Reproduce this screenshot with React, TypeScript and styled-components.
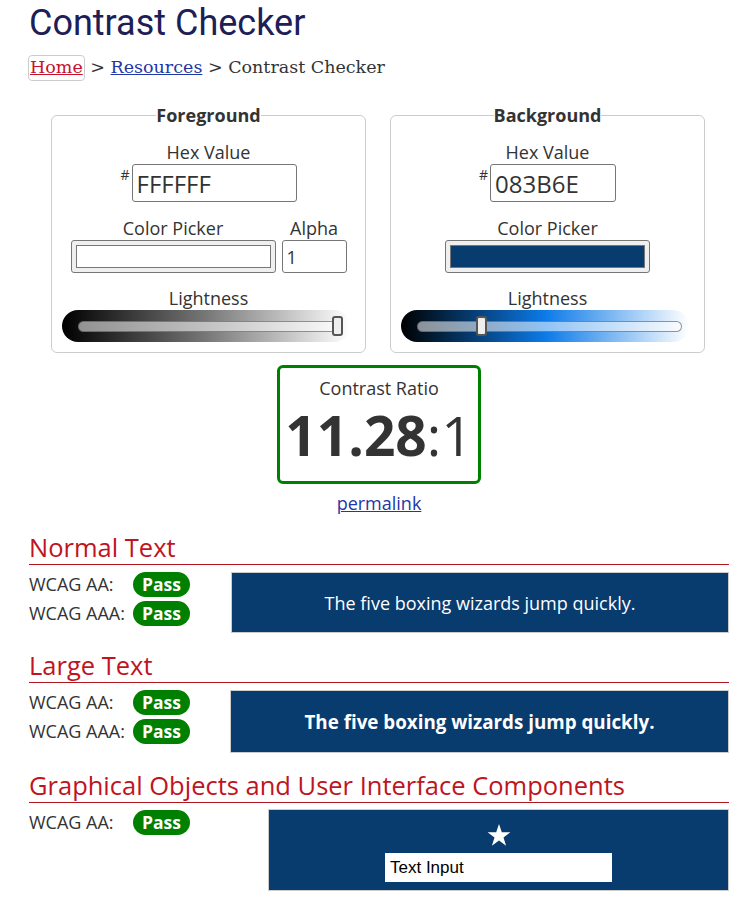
import styled, { createGlobalStyle } from 'styled-components'

const GlobalStyle = createGlobalStyle`
	body {
		margin: 0;
		font-family: 'Open Sans', 'Liberation Sans', sans-serif;
		font-size: 18px;
		color: #333;
		background: #fff;
	}
`

const Page = styled.main`
	width: 700px;
	padding: 0 17px 0 29px;
`

const Title = styled.h1`
	margin: 0;
	padding-top: 1px;
	font-family: Roboto, 'Liberation Sans', sans-serif;
	font-weight: 400;
	font-size: 36px;
	line-height: 44px;
	color: #1c2056;
`

const Crumbs = styled.nav`
	margin-top: 10px;
	font-family: 'DejaVu Serif', 'Liberation Serif', serif;
	font-size: 17.5px;
	line-height: 24px;
	color: #333;

	a {
		color: #2237a6;
	}
`

const HomeLink = styled.a`
	color: #c8102e !important;
	margin-left: -1px;
	padding: 1px 1px 3px;
	border: 1px solid #ccc;
	border-radius: 4px;
`

const Panels = styled.div`
	display: flex;
	justify-content: center;
	gap: 24px;
	margin-top: 26px;
	padding-right: 2px;
`

const Panel = styled.fieldset`
	box-sizing: border-box;
	width: 315px;
	margin: 0;
	padding: 0 0 10px;
	border: 1px solid #ccc;
	border-radius: 6px;
	display: flex;
	flex-direction: column;
	align-items: center;

	legend {
		margin: 0 auto;
		padding: 0;
		font-weight: 700;
		font-size: 18px;
		line-height: 20px;
	}
`

const Label = styled.div`
	font-size: 18px;
	line-height: 24px;
	text-align: center;
`

const HexRow = styled.div`
	display: flex;
	align-items: flex-start;

	span {
		font-size: 14px;
		line-height: 18px;
		width: 11px;
		margin-top: 2px;
	}
`

const HexInput = styled.input<{ $w: number }>`
	box-sizing: border-box;
	width: ${p => p.$w}px;
	height: 38px;
	padding: 0 4px;
	border: 1px solid #767676;
	border-radius: 3px;
	font-family: 'Open Sans', sans-serif;
	font-size: 24px;
	color: #333;
`

const PickerRow = styled.div`
	display: flex;
	gap: 6px;
	margin-top: 14px;
`

const Field = styled.div`
	display: flex;
	flex-direction: column;
	align-items: center;
`

const Swatch = styled.div<{ $color: string }>`
	box-sizing: border-box;
	width: 205px;
	height: 33px;
	padding: 4px;
	background: #efefef;
	border: 1px solid #767676;
	border-radius: 3px;

	div {
		height: 100%;
		box-sizing: border-box;
		background: ${p => p.$color};
		border: 1px solid #777;
	}
`

const AlphaInput = styled.input`
	box-sizing: border-box;
	width: 65px;
	height: 33px;
	padding: 0 4px;
	border: 1px solid #767676;
	border-radius: 3px;
	font-family: 'Open Sans', sans-serif;
	font-size: 18px;
	color: #333;
`

const SliderField = styled.div`
	display: flex;
	flex-direction: column;
	align-items: center;
	margin-top: 13px;
`

const Track = styled.div<{ $gradient: string }>`
	position: relative;
	box-sizing: border-box;
	width: 288px;
	height: 32px;
	margin-right: 5px;
	padding: 11px 7px 0 16px;
	border-radius: 16px;
	background: ${p => p.$gradient};
`

const Rail = styled.div`
	box-sizing: border-box;
	height: 11px;
	border-radius: 6px;
	background: rgba(255, 255, 255, 0.55);
	border: 1px solid rgba(80, 80, 80, 0.6);
`

const Thumb = styled.div`
	position: absolute;
	top: 6px;
	width: 11px;
	height: 20px;
	box-sizing: border-box;
	margin-left: -5px;
	background: #eee;
	border: 2px solid #555;
	border-radius: 3px;
`

const RatioBox = styled.div`
	box-sizing: border-box;
	width: 204px;
	height: 119px;
	margin: 12px auto 0;
	border: 3px solid #008000;
	border-radius: 6px;
	text-align: center;
`

const RatioLabel = styled.div`
	margin-top: 8px;
	font-size: 18px;
	line-height: 24px;
`

const RatioValue = styled.div`
	font-size: 55px;
	line-height: 64px;
	margin-top: 3px;

	b {
		font-weight: 700;
	}
`

const Permalink = styled.a`
	display: block;
	width: max-content;
	margin: 7px auto 0;
	font-size: 18px;
	line-height: 24px;
	color: #2237a6;
`

const SectionTitle = styled.h2`
	margin: 16px 0 0;
	padding-bottom: 1px;
	font-weight: 400;
	font-size: 25.5px;
	line-height: 32px;
	color: #c0141e;
	border-bottom: 1px solid #b0141e;
`

const Results = styled.div<{ $col: number }>`
	display: grid;
	grid-template-columns: ${p => p.$col}px 1fr;
	align-items: start;
	margin-top: 7px;
`

const Checks = styled.div`
	display: flex;
	flex-direction: column;
	gap: 4px;
`

const Check = styled.div`
	display: grid;
	grid-template-columns: 104px auto;
	align-items: center;
	font-size: 18px;
	line-height: 25px;
`

const Badge = styled.span`
	justify-self: start;
	padding: 0 9px;
	border-radius: 13px;
	background: #008000;
	color: #fff;
	font-weight: 700;
	font-size: 17.5px;
	line-height: 25px;
`

const Sample = styled.div<{ $large?: boolean }>`
	box-sizing: border-box;
	height: ${p => (p.$large ? 63 : 61)}px;
	display: flex;
	align-items: center;
	justify-content: center;
	background: #083b6e;
	border: 1px solid #ccc;
	color: #fff;
	font-size: ${p => (p.$large ? 18.8 : 18)}px;
	font-weight: ${p => (p.$large ? 700 : 400)};
`

const ObjectSample = styled.div`
	box-sizing: border-box;
	height: 82px;
	display: flex;
	flex-direction: column;
	align-items: center;
	padding-top: 14px;
	background: #083b6e;
	border: 1px solid #ccc;
	margin-top: -1px;

	svg {
		display: block;
	}
`

const TextInput = styled.div`
	box-sizing: border-box;
	width: 227px;
	height: 29px;
	margin-top: 6px;
	padding: 0 5px;
	background: #fff;
	color: #000;
	font-family: 'Liberation Sans', Arial, sans-serif;
	font-size: 17px;
	line-height: 29px;
`

function Slider({ gradient, pos }: { gradient: string; pos: number }) {
	return (
		<SliderField>
			<Label>Lightness</Label>
			<Track $gradient={gradient}>
				<Rail />
				<Thumb style={{ left: 16 + pos * 259 }} />
			</Track>
		</SliderField>
	)
}

function Star() {
	return (
		<svg width="24" height="23" viewBox="0 0 24 23">
			<polygon fill="#fff" points="12,0 14.8,8.3 23.4,8.3 16.5,13.4 19.1,21.8 12,16.6 4.9,21.8 7.5,13.4 0.6,8.3 9.2,8.3" />
		</svg>
	)
}

export default function App() {
	return (
		<Page>
			<GlobalStyle />
			<Title>Contrast Checker</Title>
			<Crumbs>
				<HomeLink href="#">Home</HomeLink> &gt; <a href="#">Resources</a> &gt; Contrast Checker
			</Crumbs>

			<Panels>
				<Panel>
					<legend>Foreground</legend>
					<Label style={{ marginTop: 15 }}>Hex Value</Label>
					<HexRow>
						<span>#</span>
						<HexInput $w={165} defaultValue="FFFFFF" />
					</HexRow>
					<PickerRow>
						<Field>
							<Label>Color Picker</Label>
							<Swatch $color="#ffffff"><div /></Swatch>
						</Field>
						<Field>
							<Label>Alpha</Label>
							<AlphaInput defaultValue="1" />
						</Field>
					</PickerRow>
					<Slider gradient="linear-gradient(to right, #000 0%, #777 50%, #fff 100%)" pos={1} />
				</Panel>

				<Panel>
					<legend>Background</legend>
					<Label style={{ marginTop: 15 }}>Hex Value</Label>
					<HexRow>
						<span>#</span>
						<HexInput $w={126} defaultValue="083B6E" />
					</HexRow>
					<PickerRow>
						<Field>
							<Label>Color Picker</Label>
							<Swatch $color="#083b6e"><div /></Swatch>
						</Field>
					</PickerRow>
					<Slider gradient="linear-gradient(to right, #000 0%, #0c7ae8 50%, #fff 100%)" pos={0.246} />
				</Panel>
			</Panels>

			<RatioBox>
				<RatioLabel>Contrast Ratio</RatioLabel>
				<RatioValue><b>11.28</b>:1</RatioValue>
			</RatioBox>
			<Permalink href="#">permalink</Permalink>

			<SectionTitle>Normal Text</SectionTitle>
			<Results $col={202}>
				<Checks>
					<Check>WCAG AA:<Badge>Pass</Badge></Check>
					<Check>WCAG AAA:<Badge>Pass</Badge></Check>
				</Checks>
				<Sample>The five boxing wizards jump quickly.</Sample>
			</Results>

			<SectionTitle>Large Text</SectionTitle>
			<Results $col={201}>
				<Checks>
					<Check>WCAG AA:<Badge>Pass</Badge></Check>
					<Check>WCAG AAA:<Badge>Pass</Badge></Check>
				</Checks>
				<Sample $large>The five boxing wizards jump quickly.</Sample>
			</Results>

			<SectionTitle>Graphical Objects and User Interface Components</SectionTitle>
			<Results $col={239}>
				<Checks>
					<Check>WCAG AA:<Badge>Pass</Badge></Check>
				</Checks>
				<ObjectSample>
					<Star />
					<TextInput>Text Input</TextInput>
				</ObjectSample>
			</Results>
		</Page>
	)
}
